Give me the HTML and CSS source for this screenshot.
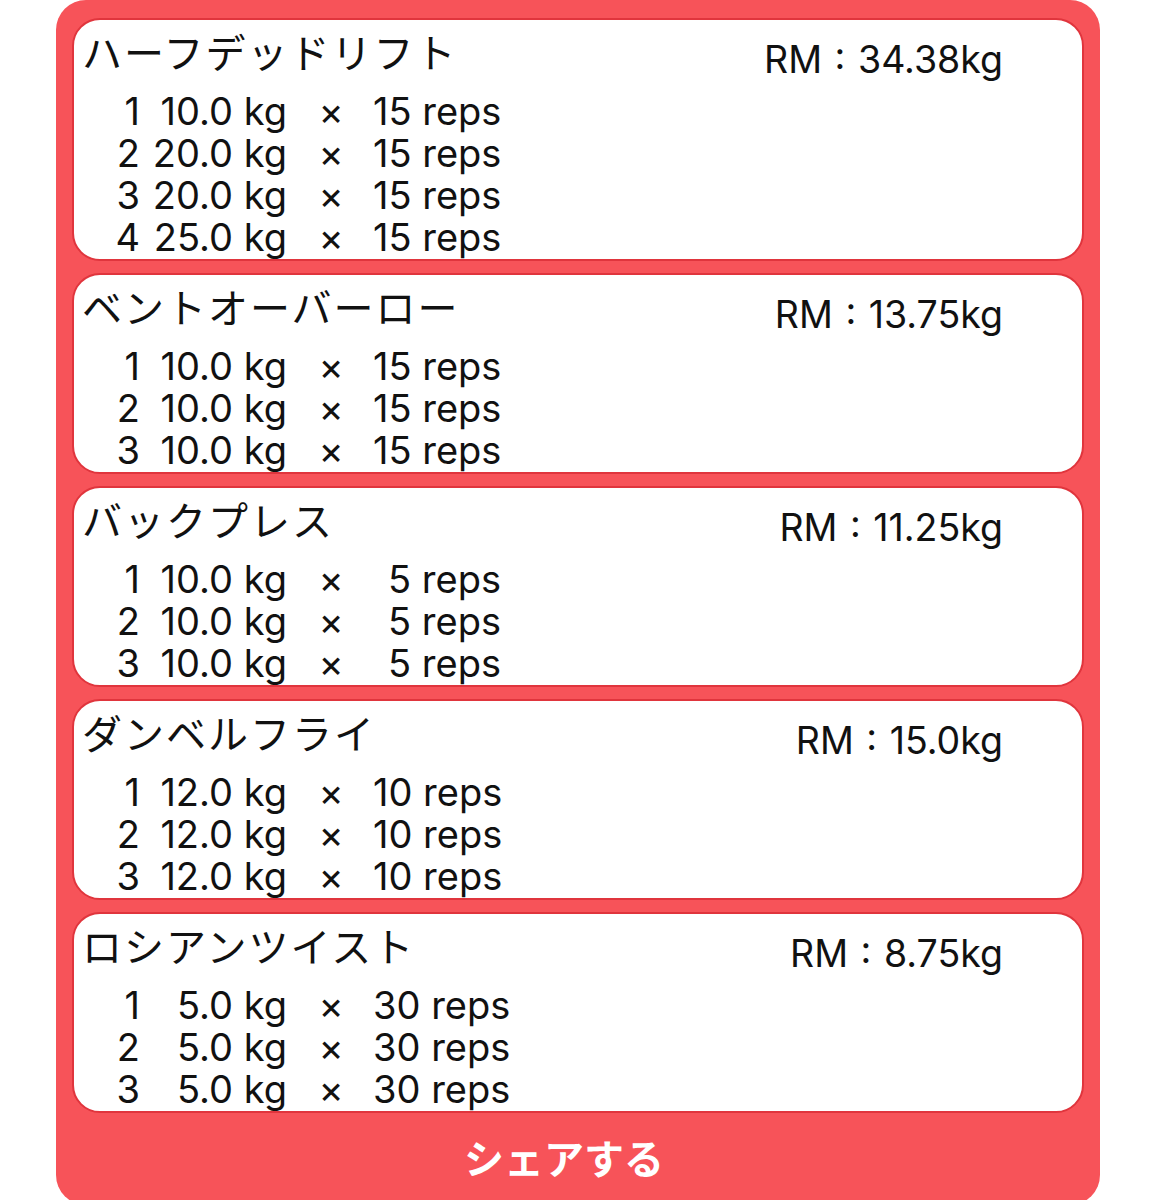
FILE: index.html
```html
<!DOCTYPE html>
<html lang="ja">
<head>
<meta charset="utf-8">
<title>トレーニング記録</title>
<link rel="stylesheet" href="styles.css">
</head>
<body>
<div class="panel">
  <div class="card">
    <div class="head"><div class="title">ハーフデッドリフト</div><div class="rm">RM : 34.38kg</div></div>
    <div class="sets">
      <div class="n">1</div><div class="w">10.0 kg</div><div class="x">×</div><div class="r">15 reps</div>
      <div class="n">2</div><div class="w">20.0 kg</div><div class="x">×</div><div class="r">15 reps</div>
      <div class="n">3</div><div class="w">20.0 kg</div><div class="x">×</div><div class="r">15 reps</div>
      <div class="n">4</div><div class="w">25.0 kg</div><div class="x">×</div><div class="r">15 reps</div>
    </div>
  </div>
  <div class="card">
    <div class="head"><div class="title">ベントオーバーロー</div><div class="rm">RM : 13.75kg</div></div>
    <div class="sets">
      <div class="n">1</div><div class="w">10.0 kg</div><div class="x">×</div><div class="r">15 reps</div>
      <div class="n">2</div><div class="w">10.0 kg</div><div class="x">×</div><div class="r">15 reps</div>
      <div class="n">3</div><div class="w">10.0 kg</div><div class="x">×</div><div class="r">15 reps</div>
    </div>
  </div>
  <div class="card">
    <div class="head"><div class="title">バックプレス</div><div class="rm">RM : 11.25kg</div></div>
    <div class="sets">
      <div class="n">1</div><div class="w">10.0 kg</div><div class="x">×</div><div class="r">5 reps</div>
      <div class="n">2</div><div class="w">10.0 kg</div><div class="x">×</div><div class="r">5 reps</div>
      <div class="n">3</div><div class="w">10.0 kg</div><div class="x">×</div><div class="r">5 reps</div>
    </div>
  </div>
  <div class="card">
    <div class="head"><div class="title">ダンベルフライ</div><div class="rm">RM : 15.0kg</div></div>
    <div class="sets">
      <div class="n">1</div><div class="w">12.0 kg</div><div class="x">×</div><div class="r">10 reps</div>
      <div class="n">2</div><div class="w">12.0 kg</div><div class="x">×</div><div class="r">10 reps</div>
      <div class="n">3</div><div class="w">12.0 kg</div><div class="x">×</div><div class="r">10 reps</div>
    </div>
  </div>
  <div class="card">
    <div class="head"><div class="title">ロシアンツイスト</div><div class="rm">RM : 8.75kg</div></div>
    <div class="sets">
      <div class="n">1</div><div class="w">5.0 kg</div><div class="x">×</div><div class="r">30 reps</div>
      <div class="n">2</div><div class="w">5.0 kg</div><div class="x">×</div><div class="r">30 reps</div>
      <div class="n">3</div><div class="w">5.0 kg</div><div class="x">×</div><div class="r">30 reps</div>
    </div>
  </div>
  <div class="share">シェアする</div>
</div>
</body>
</html>
```

FILE: styles.css
```css
html, body {
  margin: 0;
  padding: 0;
  background: #ffffff;
  overflow: hidden;
}
body {
  font-family: Inter, "Liberation Sans", "Noto Sans CJK JP", sans-serif;
  color: #111111;
}
.panel {
  margin-left: 56px;
  width: 1044px;
  height: 1205px;
  box-sizing: border-box;
  background: #f75359;
  border-radius: 30px;
  padding: 18px 16px 0 16px;
  display: flex;
  flex-direction: column;
  gap: 12px;
}
.card {
  background: #ffffff;
  border: 2px solid #e0353d;
  border-radius: 28px;
  padding: 8px 0 1px 0;
}
.head {
  display: flex;
  justify-content: space-between;
  align-items: flex-start;
  height: 46px;
}
.title {
  font-family: "Noto Sans CJK JP", sans-serif;
  font-size: 40px;
  letter-spacing: 2px;
  line-height: 46px;
  padding-left: 8px;
  white-space: nowrap;
}
.rm {
  font-size: 37.5px;
  line-height: 46px;
  margin-top: 9px;
  padding-right: 79px;
  word-spacing: 2px;
  white-space: nowrap;
}
.sets {
  display: grid;
  grid-template-columns: 66px 147px 86px 128px;
  grid-auto-rows: 42px;
  margin-top: 16px;
  font-size: 38px;
  line-height: 42px;
  white-space: nowrap;
}
.n, .w, .r { text-align: right; }
.x { text-align: center; padding-left: 2px; }
.share {
  flex: 1;
  display: flex;
  align-items: center;
  justify-content: center;
  padding-right: 28px;
  padding-bottom: 16px;
  color: #ffffff;
  font-family: "Noto Sans CJK JP", sans-serif;
  font-weight: 700;
  font-size: 40px;
  white-space: nowrap;
}
```
